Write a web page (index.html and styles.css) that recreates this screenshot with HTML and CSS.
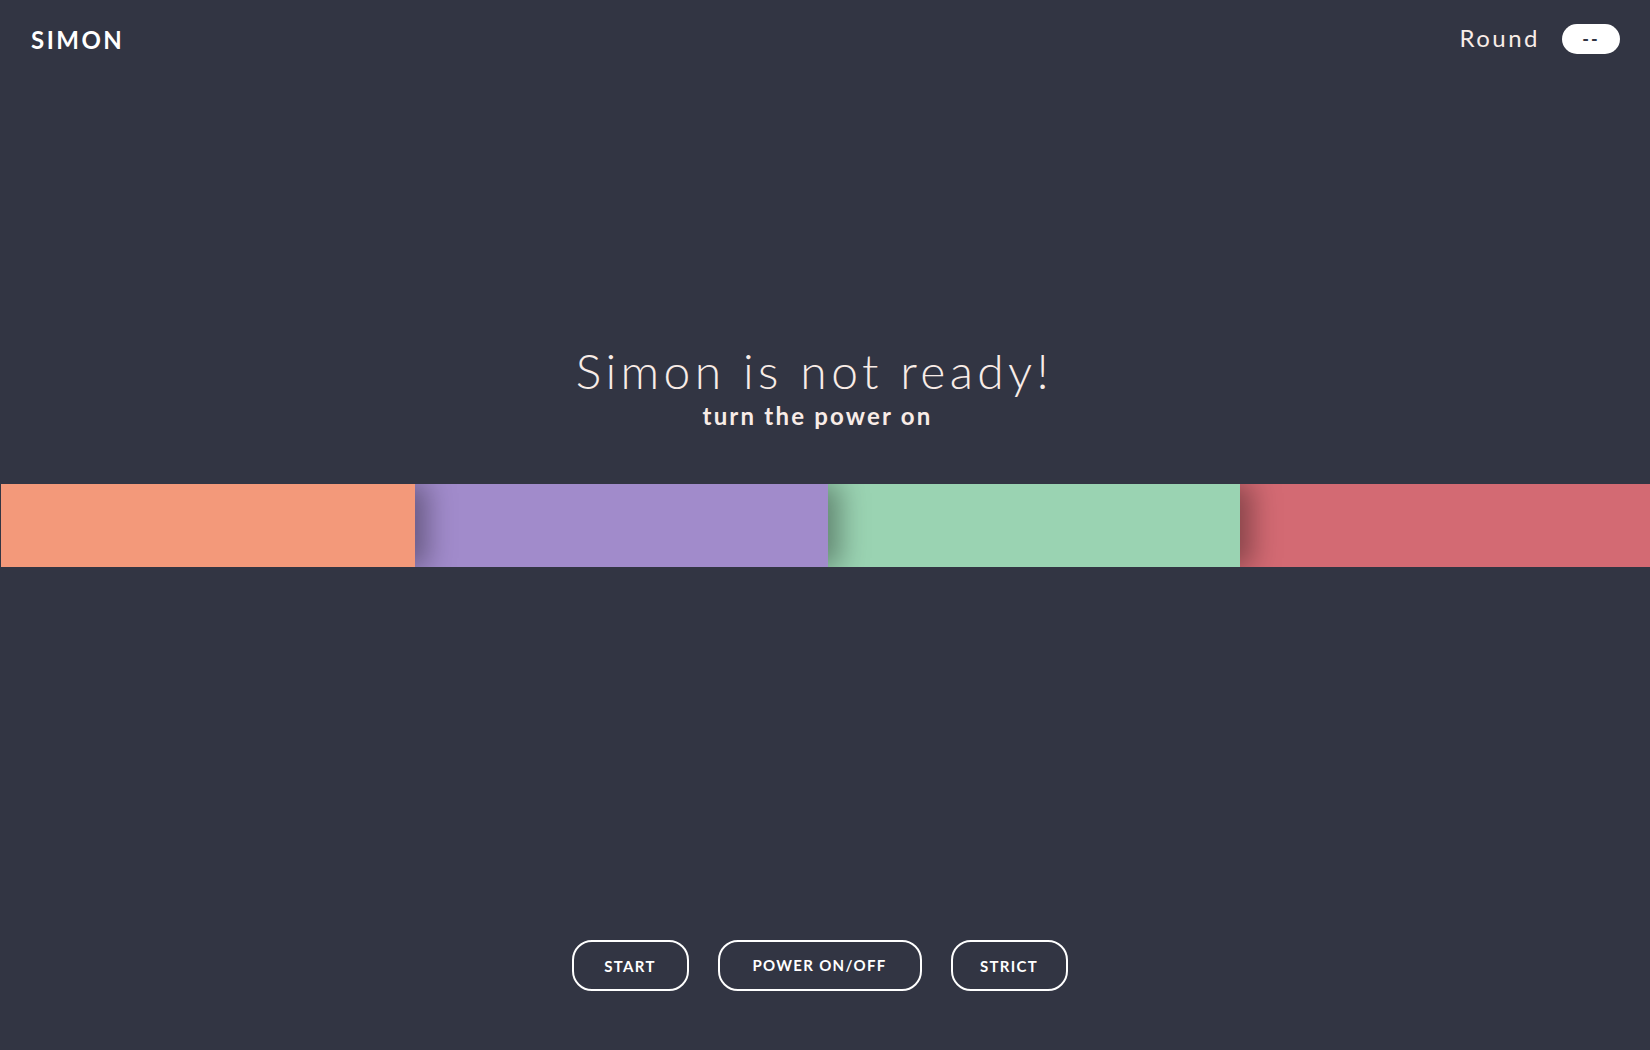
FILE: index.html
```html
<!DOCTYPE html>
<html lang="en">
<head>
<meta charset="utf-8">
<title>Simon</title>
<link rel="stylesheet" href="styles.css">
</head>
<body>
<header class="topbar">
  <div class="logo">SIMON</div>
  <div class="round">
    <span class="round-label">Round</span>
    <span class="round-count">--</span>
  </div>
</header>

<section class="hero">
  <h1 class="hero-title">Simon is not ready!</h1>
  <p class="hero-sub">turn the power on</p>
</section>

<div class="pads">
  <div class="pad pad-orange"></div>
  <div class="pad pad-purple"></div>
  <div class="pad pad-green"></div>
  <div class="pad pad-red"></div>
</div>

<div class="controls">
  <button class="btn">START</button>
  <button class="btn btn-wide">POWER ON/OFF</button>
  <button class="btn">STRICT</button>
</div>
</body>
</html>
```

FILE: styles.css
```css
html, body {
  margin: 0;
  padding: 0;
}

body {
  background: #323543;
  color: #ffffff;
  font-family: Lato, "Open Sans", "Liberation Sans", sans-serif;
  height: 100vh;
  overflow: hidden;
}

.topbar {
  display: flex;
  justify-content: space-between;
  align-items: center;
  height: 30px;
  padding: 24px 30px 0 31px;
}

.logo {
  font-size: 24px;
  font-weight: 700;
  letter-spacing: 2.5px;
  line-height: 30px;
  padding-top: 2px;
}

.round {
  display: flex;
  align-items: center;
  gap: 22px;
}

.round-label {
  font-size: 24px;
  font-weight: 400;
  letter-spacing: 2.5px;
  line-height: 30px;
  color: #f8ece7;
  margin-top: -2px;
}

.round-count {
  display: flex;
  align-items: center;
  justify-content: center;
  width: 58px;
  height: 30px;
  border-radius: 15px;
  background: #ffffff;
  color: #323543;
  font-size: 18px;
  font-weight: 700;
  letter-spacing: 2px;
}

.hero {
  margin-top: 288px;
  padding-right: 15px;
  text-align: center;
  color: #f8ece7;
}

.hero-title {
  margin: 0;
  font-size: 48px;
  font-weight: 300;
  letter-spacing: 4.4px;
  line-height: 1.2;
  padding-right: 6px;
}

.hero-sub {
  margin: 2px 0 0;
  font-size: 24px;
  font-weight: 700;
  letter-spacing: 2.2px;
  line-height: 1.2;
}

.pads {
  display: flex;
  margin-top: 54px;
  margin-left: 1px;
  height: 83px;
  overflow: hidden;
}

.pad {
  position: relative;
  flex: 0 0 412.5px;
  box-shadow: 12px 0 26px rgba(0, 0, 0, 0.36);
}

.pad-orange {
  flex-basis: 414px;
  background: #f3997a;
  z-index: 4;
}

.pad-purple {
  background: #a18bcb;
  z-index: 3;
}

.pad-green {
  background: #9ad3b2;
  z-index: 2;
}

.pad-red {
  background: #d36a73;
  z-index: 1;
  box-shadow: none;
}

.controls {
  display: flex;
  justify-content: center;
  gap: 29px;
  margin-top: 373px;
  padding-right: 11px;
}

.btn {
  width: 117px;
  height: 51px;
  padding: 0;
  background: transparent;
  border: 2px solid #ffffff;
  border-radius: 20px;
  color: #ffffff;
  font-family: Lato, "Open Sans", "Liberation Sans", sans-serif;
  font-size: 15px;
  font-weight: 700;
  letter-spacing: 1.3px;
  cursor: pointer;
}

.btn-wide {
  width: 204px;
  padding-bottom: 2px;
}
```
